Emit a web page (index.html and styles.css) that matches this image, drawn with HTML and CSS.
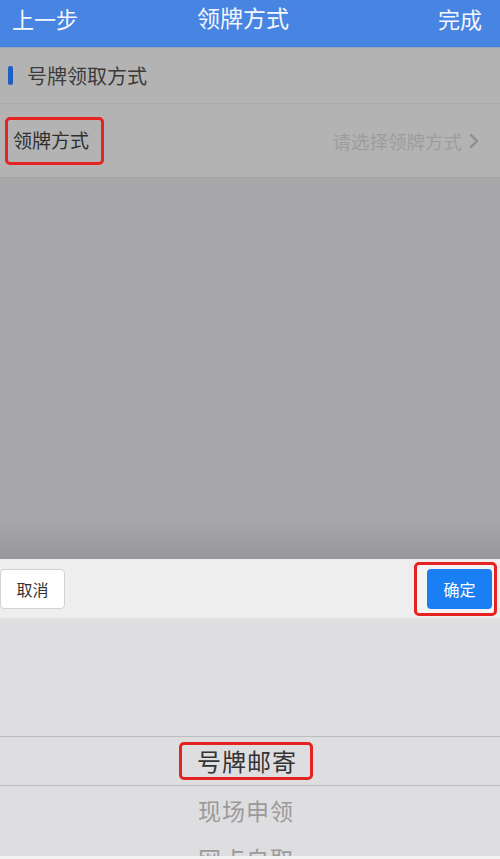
FILE: index.html
```html
<!DOCTYPE html>
<html lang="zh">
<head>
<meta charset="utf-8">
<link rel="stylesheet" href="styles.css">
</head>
<body>
<div class="app">
  <header class="nav">
    <span class="nav-btn left">上一步</span>
    <span class="nav-title">领牌方式</span>
    <span class="nav-btn right">完成</span>
  </header>
  <div class="section-title"><span class="bar"></span>号牌领取方式</div>
  <div class="row">
    <span class="mark row-label">领牌方式</span>
    <span class="row-value">请选择领牌方式
      <svg class="chev" width="12" height="18" viewBox="0 0 12 18"><path d="M3 3 L9 9 L3 15" fill="none" stroke="#8e8e8e" stroke-width="2.4" stroke-linecap="round" stroke-linejoin="round"/></svg>
    </span>
  </div>
  <div class="mask"></div>
  <div class="toolbar">
    <button class="btn cancel">取消</button>
    <span class="mark confirm-wrap"><button class="btn confirm">确定</button></span>
  </div>
  <div class="picker">
    <div class="picker-space"></div>
    <div class="picker-item selected"><span class="mark sel-text">号牌邮寄</span></div>
    <div class="picker-item">现场申领</div>
    <div class="picker-item">网点自取</div>
  </div>
</div>
</body>
</html>
```
FILE: styles.css
```css
html, body {
  margin: 0;
  padding: 0;
}
body {
  width: 500px;
  height: 859px;
  overflow: hidden;
  font-family: "Noto Sans CJK SC", "Noto Sans", sans-serif;
  background: #f4f4f5;
}
.app {
  display: flex;
  flex-direction: column;
  height: 856px;
  overflow: hidden;
}
.nav {
  height: 48px;
  flex: none;
  background: #4884e2;
  display: grid;
  grid-template-columns: 1fr auto 1fr;
  align-items: center;
  padding: 0 18px 12px 12px;
  box-sizing: border-box;
  color: #f4f7fc;
  font-size: 22px;
  line-height: 1;
  border-bottom: 1px solid #9aa6b8;
}
.nav-btn.right {
  justify-self: end;
}
.nav-title {
  font-size: 23px;
  margin-right: 8px;
}
.section-title {
  height: 56px;
  flex: none;
  background: #b3b3b3;
  display: flex;
  align-items: center;
  padding-left: 8px;
  font-size: 20px;
  color: #3b3b3b;
  border-bottom: 1px solid #a9a9a9;
  box-sizing: border-box;
}
.bar {
  width: 5px;
  height: 19px;
  background: #1e5fc0;
  border-radius: 2px;
  margin-right: 14px;
}
.row {
  height: 74px;
  flex: none;
  background: #b3b3b3;
  display: flex;
  align-items: center;
  justify-content: space-between;
  padding: 0 20px 0 5px;
  border-bottom: 1px solid #a3a3a3;
  box-sizing: border-box;
}
.mark {
  border: 3px solid #e52421;
  border-radius: 5px;
}
.row-label {
  font-size: 19px;
  color: #2f2f2f;
  padding: 7px 12px 10px 5px;
  line-height: 25px;
}
.row-value {
  font-size: 18.5px;
  color: #9d9d9d;
  display: flex;
  align-items: center;
  gap: 6px;
}
.mask {
  flex: none;
  height: 381px;
  background: linear-gradient(to bottom, #a7a6a8 0%, #a7a6a8 90%, #98979a 100%);
}
.toolbar {
  height: 60px;
  flex: none;
  background: #efeeef;
  display: flex;
  align-items: center;
  justify-content: space-between;
  padding: 0 3px 0 0;
  border-bottom: 1px solid #e2e1e3;
  box-sizing: border-box;
}
.btn {
  font-family: inherit;
  font-size: 16px;
  border-radius: 4px;
  height: 40px;
  padding: 0;
  white-space: nowrap;
  cursor: pointer;
}
.cancel {
  background: #fff;
  border: 1px solid #d2d2d2;
  color: #333;
  width: 65px;
}
.confirm-wrap {
  display: flex;
  padding: 4px 2px 4px 10px;
  background: #f4f4f4;
}
.confirm {
  background: #1a7ff3;
  border: none;
  color: #fff;
  width: 65px;
}
.picker {
  flex: 1;
  background: #dedde0;
  display: flex;
  flex-direction: column;
  align-items: stretch;
}
.picker-space {
  height: 117px;
  flex: none;
  border-bottom: 1px solid #bdbcbf;
}
.picker-item {
  height: 48px;
  flex: none;
  display: flex;
  align-items: center;
  justify-content: center;
  font-size: 23px;
  color: #9a9a9a;
  letter-spacing: 1px;
  padding-right: 8px;
}
.picker-item.selected {
  height: 49px;
  border-bottom: 1px solid #bdbcbf;
  box-sizing: border-box;
  color: #333;
}
.sel-text {
  font-size: 24px;
  padding: 0 13px 0 15px;
  line-height: 32px;
}
```
